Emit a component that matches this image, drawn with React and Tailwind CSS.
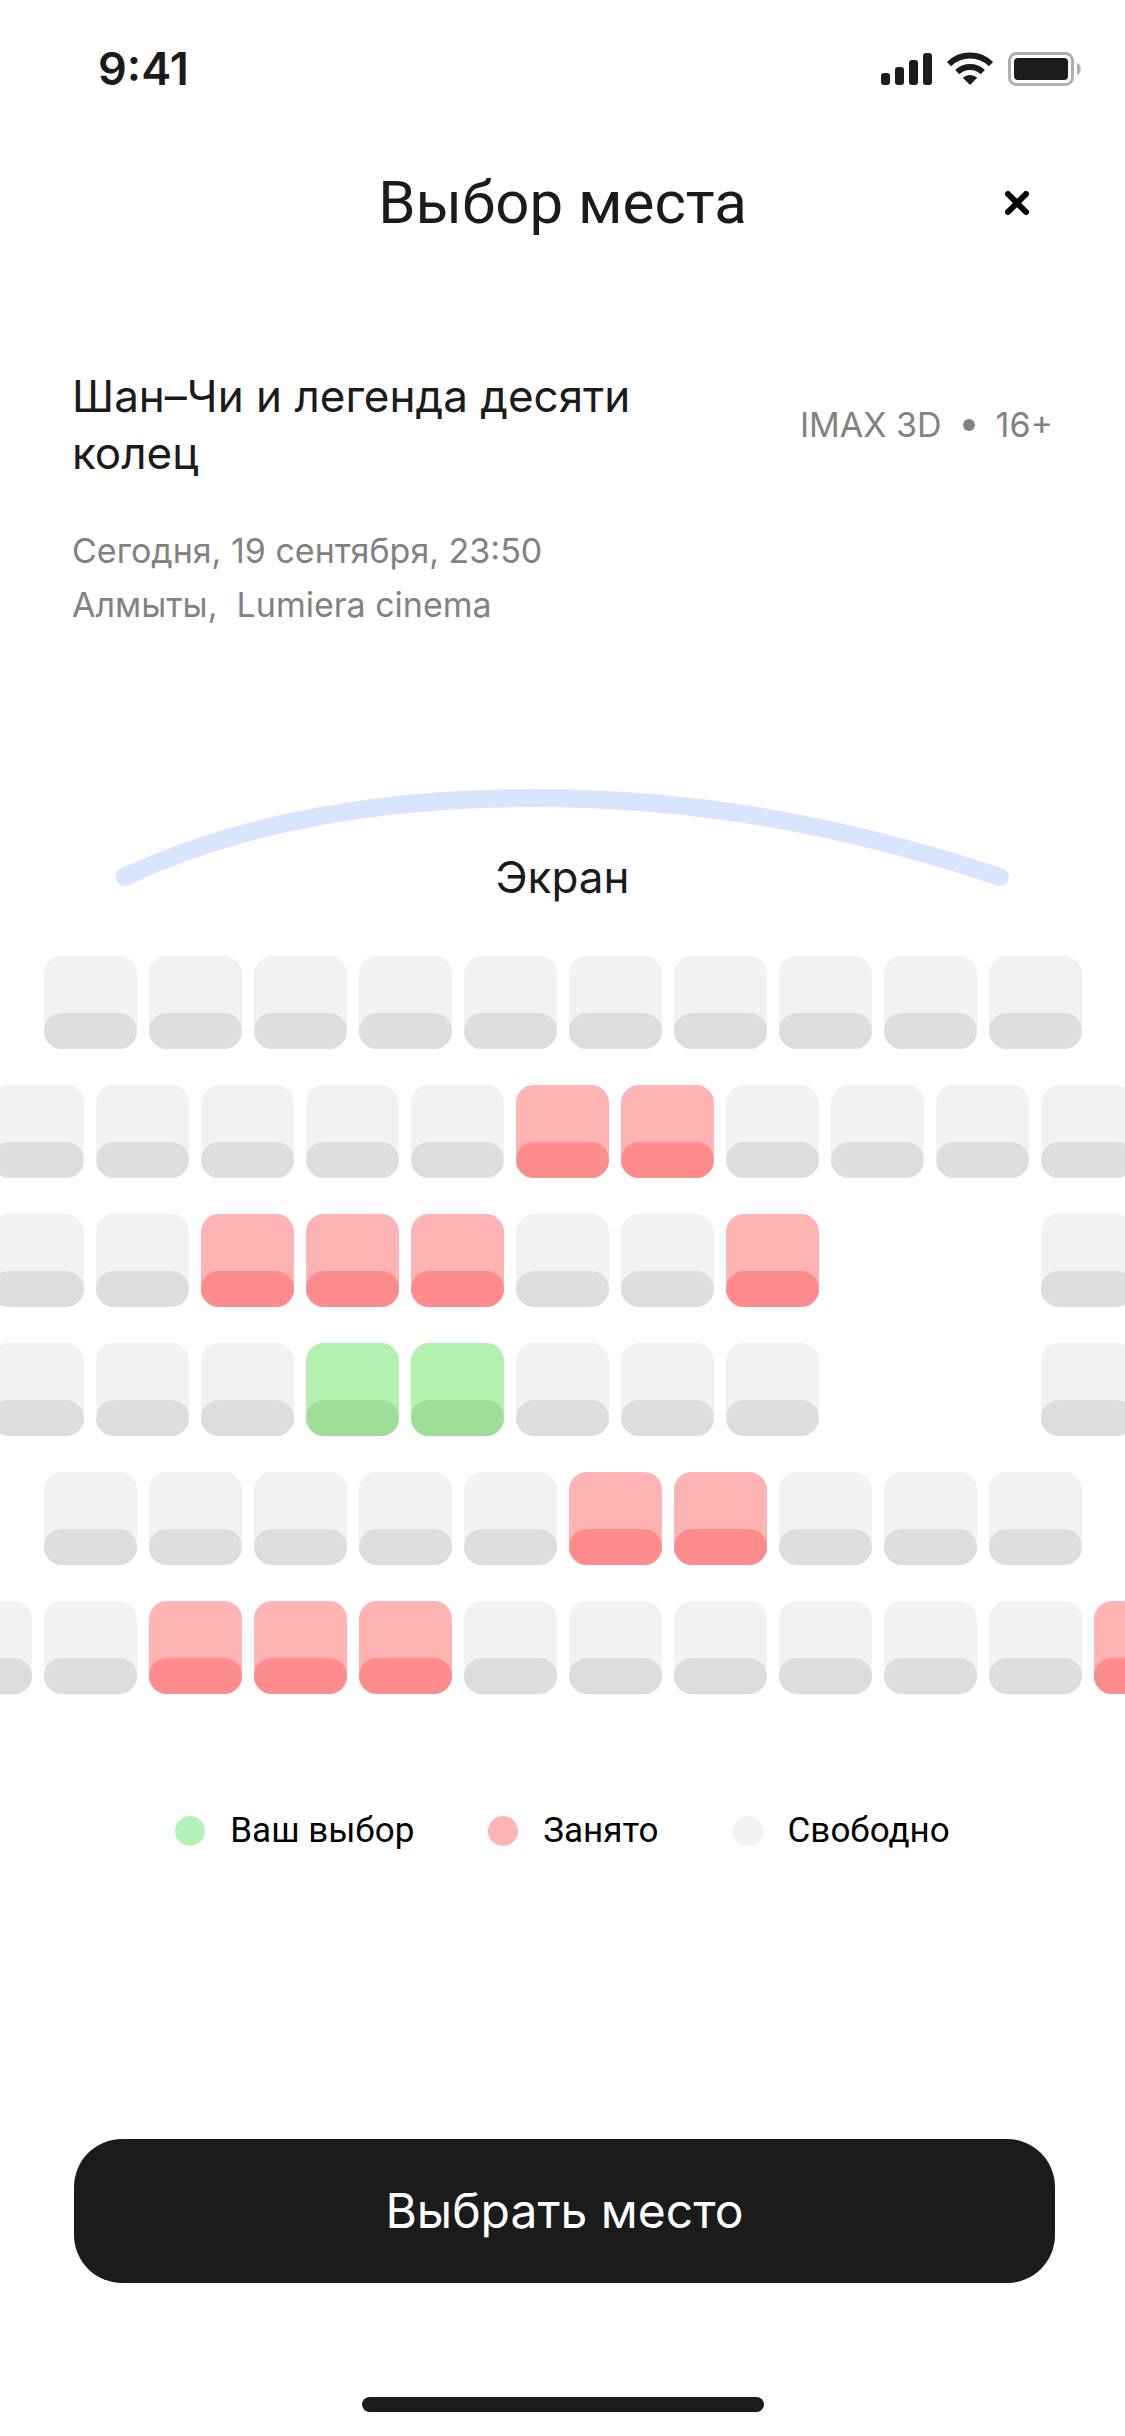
const FREE = "free";
const BUSY = "busy";
const MINE = "mine";
const NONE = "none";

const SEAT_CODES = { f: FREE, b: BUSY, m: MINE, _: NONE };

const ROWS = [
  "ffffffffff",
  "fffffbbffff",
  "ffbbbffb__f",
  "fffmmfff__f",
  "fffffbbfff",
  "ffbbbffffffb",
];

const SEAT_STYLES = {
  [FREE]: { back: "bg-[#f2f2f2]", cushion: "bg-[#dddddd]", label: "свободно" },
  [BUSY]: { back: "bg-[#ffb3b3]", cushion: "bg-[#ff8c8c]", label: "занято" },
  [MINE]: { back: "bg-[#b2f2ae]", cushion: "bg-[#9ede98]", label: "ваш выбор" },
};

const LEGEND = [
  { text: "Ваш выбор", dot: "bg-[#b2f2b8]" },
  { text: "Занято", dot: "bg-[#ffb3b3]" },
  { text: "Свободно", dot: "bg-[#f2f2f2]" },
];

function StatusBar() {
  return (
    <div className="flex h-[138px] items-center justify-between pr-[43px] pl-[98px]">
      <span className="text-[45px] font-semibold">9:41</span>
      <svg width="201" height="34" viewBox="0 0 201 34" fill="#1b1b1b" aria-hidden="true">
        <rect x="0" y="21" width="9" height="12" rx="3" />
        <rect x="14" y="15" width="9" height="18" rx="3" />
        <rect x="28" y="8" width="9" height="25" rx="3" />
        <rect x="42" y="1" width="9" height="32" rx="3" />
        <g fill="none" stroke="#1b1b1b">
          <path d="M68 12.2a30 30 0 0 1 42 0" strokeWidth="6" />
          <path d="M76.2 20.2a18.500 18.500 0 0 1 25.600 0" strokeWidth="6" />
        </g>
        <path d="M89 33l-7.200-7.200a10.500 10.500 0 0 1 14.400 0z" />
        <rect x="128.500" y="1.500" width="63" height="31" rx="7" fill="none" stroke="#afafaf" strokeWidth="3" />
        <rect x="133" y="6" width="54" height="22" rx="4" />
        <path d="M196 11c5 2 5 10 0 12z" fill="#afafaf" />
      </svg>
    </div>
  );
}

function Seat({ kind, row, number }) {
  if (kind === NONE) return <div className="size-[93px] shrink-0" />;
  const style = SEAT_STYLES[kind];
  return (
    <button
      type="button"
      disabled={kind === BUSY}
      aria-pressed={kind === MINE}
      aria-label={`Ряд ${row}, место ${number}, ${style.label}`}
      className={`flex size-[93px] shrink-0 flex-col justify-end rounded-[18px] ${style.back}`}
    >
      <span className={`block h-[36px] w-full rounded-[18px] ${style.cushion}`} />
    </button>
  );
}

export default function App() {
  return (
    <div className="flex min-h-screen flex-col overflow-hidden bg-white font-['Inter','Liberation_Sans',sans-serif] text-[#1b1b1b]">
      <StatusBar />

      <header className="grid grid-cols-[1fr_auto_1fr] items-center px-[72px] pt-[20px]">
        <h1 className="col-start-2 font-['Roboto',sans-serif] text-[60px] leading-[90px]">Выбор места</h1>
        <button type="button" aria-label="Закрыть" className="flex size-[72px] items-center justify-center justify-self-end">
          <svg width="24" height="24" viewBox="0 0 24 24" aria-hidden="true">
            <path d="M3 3l18 18M21 3L3 21" stroke="#000" strokeWidth="6" strokeLinecap="round" />
          </svg>
        </button>
      </header>

      <section className="px-[72px] pt-[120px]">
        <div className="flex items-center justify-between">
          <h2 className="max-w-[600px] text-[44px] leading-[57px]">Шан–Чи и легенда десяти колец</h2>
          <p className="flex items-center gap-[21px] text-[34px] leading-[54px] text-[#828282]">
            <span>IMAX 3D</span>
            <span className="size-[12px] rounded-full bg-[#828282]" />
            <span>16+</span>
          </p>
        </div>
        <p className="pt-[42px] text-[34px] leading-[54px] text-[#828282]">
          Сегодня, 19 сентября, 23:50
          <br />
          Алмыты,&nbsp; Lumiera cinema
        </p>
      </section>

      <div className="mt-[157px] grid">
        <svg viewBox="0 0 1125 98" className="col-start-1 row-start-1 w-full" aria-hidden="true">
          <path d="M124.500 88C245 31 390 9 533 9C700 9 850 38 1000 88" fill="none" stroke="#d9e5ff" strokeWidth="18" strokeLinecap="round" />
        </svg>
        <p className="col-start-1 row-start-1 pt-[60px] text-center text-[44px] leading-[57px]">Экран</p>
      </div>

      <main className="mt-[50px] flex flex-col gap-[36px]">
        {ROWS.map((row, r) => (
          <div key={r} className="flex justify-center gap-[12px]">
            {row.split("").map((code, i) => (
              <Seat key={i} kind={SEAT_CODES[code]} row={r + 1} number={i + 1} />
            ))}
          </div>
        ))}
      </main>

      <ul className="mt-[110px] flex justify-center gap-[74px] font-['Roboto',sans-serif] text-[35px] leading-[54px] text-black">
        {LEGEND.map((item) => (
          <li key={item.text} className="flex items-center gap-[25px]">
            <span className={`size-[30px] rounded-full ${item.dot}`} />
            {item.text}
          </li>
        ))}
      </ul>

      <div className="mt-auto pr-[70px] pl-[74px]">
        <button type="button" className="h-[144px] w-full rounded-[48px] bg-[#1b1b1b] text-[48px] text-white">
          Выбрать место
        </button>
      </div>
      <div className="mx-auto mt-[114px] mb-[24px] h-[15px] w-[402px] rounded-full bg-[#1b1b1b]" />
    </div>
  );
}
